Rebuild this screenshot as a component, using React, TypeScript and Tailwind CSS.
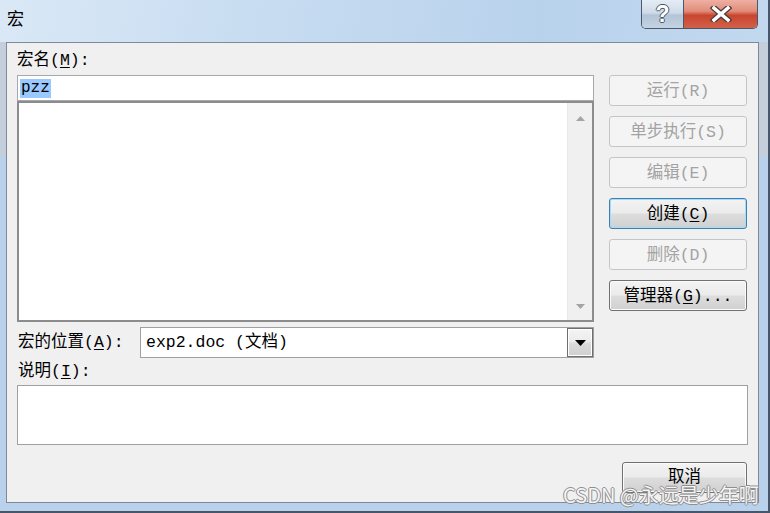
const uiFont = "font-[family-name:'Liberation_Mono','Noto_Sans_CJK_SC',monospace]";

type BtnProps = { label: string; hotkey: string; suffix?: string; disabled?: boolean; focused?: boolean; width?: string };

const DialogButton = ({ label, hotkey, suffix = "", disabled, focused, width = "w-[138px]" }: BtnProps) => {
  const base = `${width} h-[31px] rounded-[3px] border flex items-center justify-center pt-[3px] text-[16.5px] leading-none`;
  if (disabled) {
    return (
      <div className={`${base} border-[#c3c6c9] bg-[#f4f4f4] text-[#a3a3a3]`}>
        {label}({hotkey}){suffix}
      </div>
    );
  }
  return (
    <div
      className={`${base} text-black bg-[linear-gradient(to_bottom,#f3f3f3_0%,#ebebeb_48%,#dddddd_52%,#d0d0d0_100%)] ${
        focused ? "border-[#3c7fb1] shadow-[inset_0_0_0_1px_#a6dcf8]" : "border-[#707070] shadow-[inset_0_0_0_1px_#fbfbfb]"
      }`}
    >
      {label}(<span className="underline underline-offset-2">{hotkey}</span>){suffix}
    </div>
  );
};

const TitleBar = () => (
  <div className="h-[42px] flex items-start bg-[linear-gradient(100deg,#dae8f6_0%,#c7dcf1_35%,#b9d2ec_70%,#c2d8ef_100%)]">
    <div className="pl-[7px] pt-[12px] text-[17px] leading-[17px] text-black">宏</div>
    <div className="ml-auto mr-[10px] flex h-[29px] border-x border-b border-[#4a5869] rounded-b-[5px] overflow-hidden">
      <div className="w-[42px] flex items-center justify-center border-r border-[#4a5869] bg-[linear-gradient(to_bottom,#e4ecf5_0%,#cfdbe8_45%,#b3c4d7_55%,#c5d3e2_100%)]">
        <span className="text-[23px] font-bold leading-none text-white font-[family-name:'Liberation_Sans',sans-serif] [text-shadow:1px_0_#4b5563,-1px_0_#4b5563,0_1px_#4b5563,0_-1px_#4b5563]">
          ?
        </span>
      </div>
      <div className="w-[73px] flex items-center justify-center bg-[linear-gradient(to_bottom,#eeb0a3_0%,#e08c79_40%,#c9452f_55%,#d2614a_100%)]">
        <svg width="22" height="16" viewBox="0 0 22 16">
          <path d="M4 2 L18 14 M18 2 L4 14" stroke="#4a3b3b" strokeWidth="6" strokeLinecap="square" />
          <path d="M4 2 L18 14 M18 2 L4 14" stroke="#ffffff" strokeWidth="3.5" strokeLinecap="square" />
        </svg>
      </div>
    </div>
  </div>
);

const Triangle = ({ up, color, w, h }: { up?: boolean; color: string; w: number; h: number }) => (
  <svg width={w} height={h} viewBox={`0 0 ${w} ${h}`}>
    <path d={up ? `M0 ${h} L${w / 2} 0 L${w} ${h} Z` : `M0 0 L${w} 0 L${w / 2} ${h} Z`} fill={color} />
  </svg>
);

export default function App() {
  return (
    <div className={`w-[770px] h-[513px] overflow-hidden bg-[linear-gradient(to_bottom,#c4cfdb_0%,#c4cfdb_30%,#b9d1ea_31%,#b9d1ea_100%)] relative ${uiFont}`}>
      <div className="w-[770px] h-[513px] border-r-2 border-b-2 border-[#47566a] flex flex-col">
        <TitleBar />

        {/* client area */}
        <div className="ml-[6px] w-[753px] h-[461px] border border-[#7d8a99] bg-[#f0f0f0] pl-[10px] pr-[11px] pt-[6px] text-black">
          <div className="flex">
            <div className="w-[577px] flex flex-col">
              <div className="h-[26px] text-[16.5px] leading-[24px]">
                宏名(<span className="underline underline-offset-2">M</span>):
              </div>
              <div className="h-[26px] border border-[#a5a9af] bg-white flex items-center pl-[2px]">
                <span className="bg-[#99c9ff] text-[16px] leading-[19px] px-[1px]">pzz</span>
              </div>
              <div className="h-[221px] border-2 border-[#8c8c8c] bg-white flex">
                <div className="flex-1" />
                <div className="w-[25px] bg-[#f0f0f0] border-l border-[#e8e8e8] flex flex-col items-center justify-between pt-[13px] pb-[11px]">
                  <Triangle up color="#a4a4a4" w={9} h={5} />
                  <Triangle color="#a4a4a4" w={9} h={5} />
                </div>
              </div>
              <div className="mt-[5px] h-[31px] flex items-center">
                <div className="flex-1 pl-[1px] pt-[2px] text-[16.5px] leading-none">
                  宏的位置(<span className="underline underline-offset-2">A</span>):
                </div>
                <div className="w-[454px] h-[31px] border border-[#a0a0a0] bg-white flex items-center">
                  <div className="flex-1 pl-[5px] pt-[2px] text-[16.5px] leading-none">exp2.doc (文档)</div>
                  <div className="w-[26px] h-[29px] border border-[#6f6f6f] shadow-[inset_0_0_0_1px_#ffffff] bg-[linear-gradient(to_bottom,#f4f4f4_0%,#ececec_45%,#dadada_55%,#d0d0d0_100%)] flex items-center justify-center">
                    <Triangle color="#000000" w={11} h={6} />
                  </div>
                </div>
              </div>
            </div>

            <div className="ml-[15px] w-[138px] pt-[26px] flex flex-col gap-[10px]">
              <DialogButton label="运行" hotkey="R" disabled />
              <DialogButton label="单步执行" hotkey="S" disabled />
              <DialogButton label="编辑" hotkey="E" disabled />
              <DialogButton label="创建" hotkey="C" focused />
              <DialogButton label="删除" hotkey="D" disabled />
              <DialogButton label="管理器" hotkey="G" suffix="..." />
            </div>
          </div>

          <div className="h-[27px] flex items-center pt-[2px] text-[16.5px] leading-none pl-[1px]">
            说明(<span className="underline underline-offset-2">I</span>):
          </div>
          <div className="w-[731px] h-[60px] border border-[#a0a0a0] bg-white" />

          <div className="mt-[17px] flex justify-end">
            <div className="w-[125px] h-[31px] rounded-[3px] border border-[#707070] shadow-[inset_0_0_0_1px_#fbfbfb] bg-[linear-gradient(to_bottom,#f3f3f3_0%,#ebebeb_48%,#dddddd_52%,#d0d0d0_100%)] flex items-start justify-center pt-[7px] text-[16.5px] leading-none">
              取消
            </div>
          </div>
        </div>
      </div>

      {/* CSDN watermark */}
      <div className="absolute left-[563px] top-[484px] text-[20px] leading-[22px] text-[#f4f4f4] font-[family-name:'Noto_Sans_CJK_SC',sans-serif] [text-shadow:1px_0_#8f8f8f,-1px_0_#8f8f8f,0_1px_#8f8f8f,0_-1px_#8f8f8f] whitespace-nowrap">
        CSDN @永远是少年啊
      </div>
    </div>
  );
}
